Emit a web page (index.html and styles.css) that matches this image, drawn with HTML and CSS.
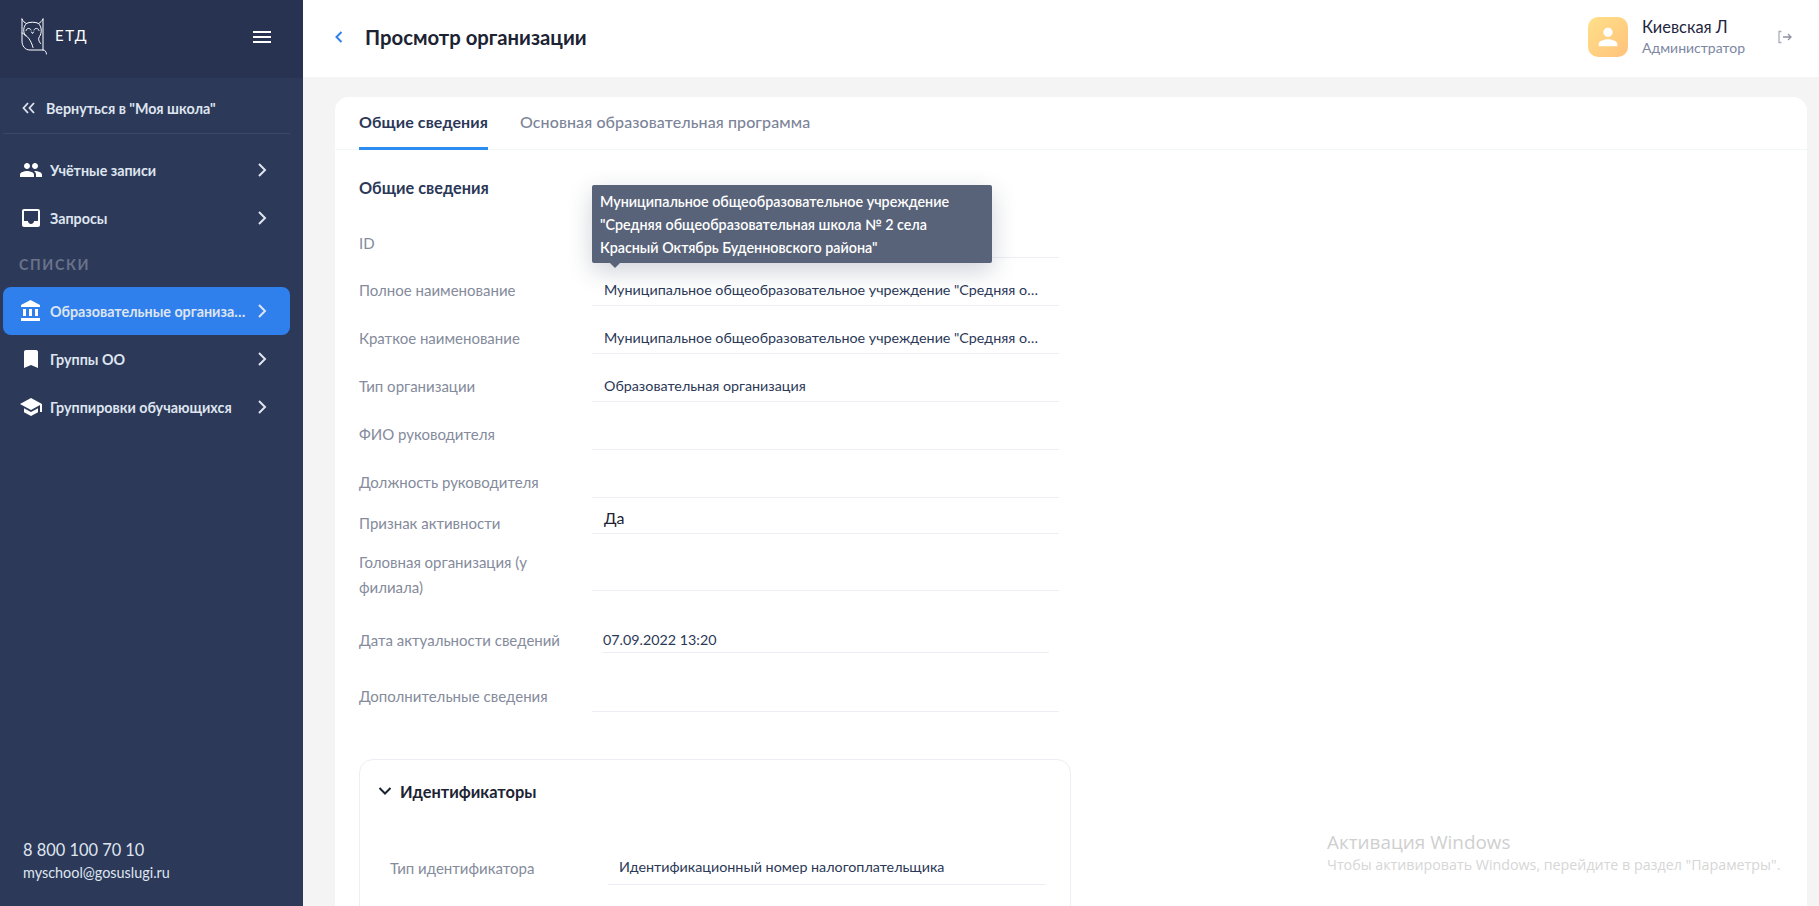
FILE: index.html
```html
<!DOCTYPE html>
<html lang="ru">
<head>
<meta charset="utf-8">
<title>Просмотр организации</title>
<link rel="stylesheet" href="styles.css">
</head>
<body>
<div class="app">
  <aside class="side">
    <div class="brand">
      <svg class="owl" viewBox="0 0 26 37" fill="none" stroke="#fff" stroke-width="1" stroke-linecap="round" stroke-linejoin="round">
        <path d="M1 1v22c0 5 3 9 8 9h13c1.800 0 3.300 1.500 3.500 4M22 1v31"/>
        <path d="M1 1c1 2.500 2.500 3.500 4.500 4.500C8 3.800 15 3.800 17.500 5.500 19.500 4.500 21 3 22 1"/>
        <path d="M5.500 5.500C2 8.500 1.800 14.500 4.500 18M17.500 5.500c3.500 3 3.500 9.500 1 13-1.500 2-1 4.500 1 7"/>
        <path d="M1 15c5 2 9 7 11 14.500"/>
        <path d="M5 12.500c.5-2.500 4-3 5 -.5M13 12c1-2.500 4.500-2 5 .5M10.500 14l1 1.500 1-1.500"/>
      </svg>
      <span class="brand-name">ЕТД</span>
      <span class="burger"><i></i><i></i><i></i></span>
    </div>
    <a class="back">
      <svg class="back-ico" viewBox="0 0 14 12" fill="none" stroke="#dfe5f0" stroke-width="1.800"><path d="M6 1 1.500 6 6 11M12 1 7.500 6 12 11"/></svg>
      <span>Вернуться в "Моя школа"</span>
    </a>
    <nav class="nav">
      <a class="item">
        <svg class="ico" viewBox="0 0 24 24"><path d="M16 11c1.660 0 2.990-1.340 2.990-3S17.660 5 16 5c-1.660 0-3 1.340-3 3s1.340 3 3 3zm-8 0c1.660 0 2.990-1.340 2.990-3S9.660 5 8 5C6.340 5 5 6.340 5 8s1.340 3 3 3zm0 2c-2.330 0-7 1.170-7 3.500V19h14v-2.500c0-2.330-4.670-3.500-7-3.500zm8 0c-.29 0-.62.02-.97.05 1.160.84 1.970 1.970 1.970 3.450V19h6v-2.500c0-2.330-4.670-3.500-7-3.500z"/></svg>
        <span class="item-text">Учётные записи</span>
        <svg class="chev" viewBox="0 0 10 16"><path d="M2 2l6 6-6 6"/></svg>
      </a>
      <a class="item">
        <svg class="ico" viewBox="0 0 24 24"><path d="M19 3H4.990c-1.110 0-1.980.89-1.980 2L3 19c0 1.100.88 2 1.990 2H19c1.100 0 2-.9 2-2V5c0-1.110-.9-2-2-2zm0 12h-4c0 1.660-1.350 3-3 3s-3-1.340-3-3H4.990V5H19v10z"/></svg>
        <span class="item-text">Запросы</span>
        <svg class="chev" viewBox="0 0 10 16"><path d="M2 2l6 6-6 6"/></svg>
      </a>
      <div class="nav-title">СПИСКИ</div>
      <a class="item active">
        <svg class="ico" viewBox="0 0 24 24"><path d="M4 10v7h3v-7H4zm6 0v7h3v-7h-3zM2 22h19v-3H2v3zm14-12v7h3v-7h-3zm-4.500-9L2 6v2h19V6l-9.500-5z"/></svg>
        <span class="item-text">Образовательные организации</span>
        <svg class="chev" viewBox="0 0 10 16"><path d="M2 2l6 6-6 6"/></svg>
      </a>
      <a class="item">
        <svg class="ico" viewBox="0 0 24 24"><path d="M17 3H7c-1.100 0-1.990.9-1.990 2L5 21l7-3 7 3V5c0-1.100-.9-2-2-2z"/></svg>
        <span class="item-text">Группы ОО</span>
        <svg class="chev" viewBox="0 0 10 16"><path d="M2 2l6 6-6 6"/></svg>
      </a>
      <a class="item">
        <svg class="ico" viewBox="0 0 24 24"><path d="M5 13.180v4L12 21l7-3.820v-4L12 17l-7-3.820zM12 3L1 9l11 6 9-4.910V17h2V9L12 3z"/></svg>
        <span class="item-text">Группировки обучающихся</span>
        <svg class="chev" viewBox="0 0 10 16"><path d="M2 2l6 6-6 6"/></svg>
      </a>
    </nav>
    <div class="contacts">
      <div class="phone">8 800 100 70 10</div>
      <div class="mail">myschool@gosuslugi.ru</div>
    </div>
  </aside>
  <main class="main">
    <header class="top">
      <svg class="top-back" viewBox="0 0 8 12"><path d="M6.500 1 1.500 6l5 5"/></svg>
      <h1 class="page-title">Просмотр организации</h1>
      <div class="avatar"><svg viewBox="0 0 24 24"><path d="M12 12c2.210 0 4-1.790 4-4s-1.790-4-4-4-4 1.790-4 4 1.790 4 4 4zm0 2c-2.670 0-8 1.340-8 4v2h16v-2c0-2.660-5.330-4-8-4z"/></svg></div>
      <div class="user">
        <div class="user-name">Киевская Л</div>
        <div class="user-role">Администратор</div>
      </div>
      <svg class="logout" viewBox="0 0 16 14" fill="none"><path d="M4.500 1.500H2v11h2.500" stroke="#a9aeb9" stroke-width="1.300"/><path d="M6 7h8M11 4l3 3-3 3" stroke="#8d93a1" stroke-width="1.300"/></svg>
    </header>
    <div class="content">
      <section class="card">
        <div class="tabs">
          <a class="tab on">Общие сведения</a>
          <a class="tab">Основная образовательная программа</a>
        </div>
        <div class="body">
          <h2 class="sec-title">Общие сведения</h2>
          <div class="form">
            <div class="row r-id"><span class="lab">ID</span><span class="val"></span></div>
            <div class="row"><span class="lab">Полное наименование</span><span class="val">Муниципальное общеобразовательное учреждение "Средняя общеобразовательная школа № 2 села Красный Октябрь Буденновского района"</span></div>
            <div class="row"><span class="lab">Краткое наименование</span><span class="val">Муниципальное общеобразовательное учреждение "Средняя общеобразовательная школа № 2 села Красный Октябрь Буденновского района"</span></div>
            <div class="row"><span class="lab">Тип организации</span><span class="val">Образовательная организация</span></div>
            <div class="row"><span class="lab">ФИО руководителя</span><span class="val"></span></div>
            <div class="row"><span class="lab">Должность руководителя</span><span class="val"></span></div>
            <div class="row r-active"><span class="lab">Признак активности</span><span class="val big">Да</span></div>
            <div class="row r-head"><span class="lab">Головная организация (у филиала)</span><span class="val"></span></div>
            <div class="row r-date"><span class="lab">Дата актуальности сведений</span><span class="val">07.09.2022 13:20</span></div>
            <div class="row r-extra"><span class="lab">Дополнительные сведения</span><span class="val"></span></div>
          </div>
          <div class="sub">
            <div class="sub-head">
              <svg class="sub-chev" viewBox="0 0 14 10"><path d="M1.500 2 7 7.500 12.500 2"/></svg>
              <span>Идентификаторы</span>
            </div>
            <div class="row r-sub"><span class="lab">Тип идентификатора</span><span class="val">Идентификационный номер налогоплательщика</span></div>
          </div>
        </div>
        <div class="tip">Муниципальное общеобразовательное учреждение "Средняя общеобразовательная школа № 2 села Красный Октябрь Буденновского района"</div>
        <div class="winmark">
          <div class="win-a">Активация Windows</div>
          <div class="win-b">Чтобы активировать Windows, перейдите в раздел "Параметры".</div>
        </div>
      </section>
    </div>
  </main>
</div>
</body>
</html>
```
FILE: styles.css
```css
* { box-sizing: border-box; }
html, body { margin: 0; height: 100%; overflow: hidden; }
body { font-family: Lato, "Open Sans", sans-serif; color: #2b3857; background: #f4f4f4; }
.app { display: flex; height: 906px; overflow: hidden; }

.side { width: 303px; flex: none; background: #2c3958; display: flex; flex-direction: column; color: #dfe5f0; }
.brand { height: 78px; flex: none; background: #273350; display: flex; align-items: center; padding: 0 32px 4px 21px; }
.owl { width: 26px; height: 37px; margin-bottom: 2px; }
.brand-name { margin: 0 0 5px 8px; color: #fff; font-size: 15px; letter-spacing: 1.500px; }
.burger { margin-left: auto; width: 18px; display: flex; flex-direction: column; gap: 3px; }
.burger i { display: block; height: 2px; background: #fff; }
.back { height: 56px; margin: 0 13px 0 3px; padding: 5px 0 0 19px; display: flex; align-items: center; gap: 10px; border-bottom: 1px solid #3a4766; font-size: 14.300px; font-weight: 700; }
.back-ico { width: 14px; height: 12px; }
.nav { padding: 12px 13px 0 3px; }
.item { height: 48px; display: flex; align-items: center; padding: 0 23px 0 16px; border-radius: 8px; font-size: 14.300px; font-weight: 700; }
.item.active { background: #2f80ed; }
.ico { width: 24px; height: 24px; fill: #fff; flex: none; margin-right: 7px; }
.item-text { flex: 1; min-width: 0; white-space: nowrap; overflow: hidden; text-overflow: ellipsis; }
.chev { width: 10px; height: 16px; flex: none; margin-left: 10px; fill: none; stroke: #dfe5f0; stroke-width: 2; }
.nav-title { height: 45px; padding: 14px 0 0 16px; font-size: 14.300px; font-weight: 700; letter-spacing: 1.600px; color: #69738b; line-height: 18px; }
.contacts { margin-top: auto; padding: 0 0 22px 23px; color: #dfe5f0; }
.phone { font-size: 16.400px; line-height: 24px; }
.mail { font-size: 14.400px; line-height: 22px; }

.main { flex: 1; min-width: 0; display: flex; flex-direction: column; }
.top { height: 77px; flex: none; background: #fff; display: flex; align-items: center; padding: 0 26px 3px 32px; }
.top-back { width: 8px; height: 12px; fill: none; stroke: #2f80ed; stroke-width: 2; margin-right: 22px; }
.page-title { margin: 0; flex: 1; font-size: 20.300px; font-weight: 700; color: #1c2333; }
.avatar { width: 40px; height: 40px; border-radius: 10px; background: linear-gradient(135deg, #ffe08a, #ffc27a); display: flex; align-items: center; justify-content: center; }
.avatar svg { width: 28px; height: 28px; fill: #fff; }
.user { margin-left: 14px; width: 123px; }
.user-name { font-size: 16.400px; line-height: 21px; color: #1d2540; }
.user-role { font-size: 14px; line-height: 22px; color: #7d86a3; }
.logout { width: 16px; height: 14px; margin-left: 12px; }

.content { flex: 1; min-height: 0; padding: 20px 12px 0 32px; }
.card { position: relative; background: #fff; border-radius: 14px 14px 0 0; height: 900px; }
.tabs { height: 53px; padding-left: 24px; display: flex; gap: 32px; border-bottom: 1px solid #eef8f5; }
.tab { height: 53px; padding-top: 15px; font-size: 16px; line-height: 20px; letter-spacing: .1px; font-weight: 500; color: #7c8498; }
.tab.on { color: #2b3857; font-weight: 700; border-bottom: 3px solid #2d8cf0; }
.body { padding: 28px 0 0 24px; }
.sec-title { margin: 0; font-size: 16.300px; line-height: 20px; font-weight: 700; color: #2b3857; }
.form { margin-top: 13px; width: 699px; }
.row { display: flex; height: 48px; }
.lab { width: 233px; flex: none; padding: 20px 16px 0 0; font-size: 15px; line-height: 25px; color: #858b9c; }
.val { flex: none; width: 467px; padding: 20px 17px 0 12px; height: 48px; border-bottom: 1px solid #eceef3; font-size: 14.300px; line-height: 24px; color: #2b3857; white-space: nowrap; overflow: hidden; text-overflow: ellipsis; }
.r-id { height: 47px; }
.r-id .val { height: 47px; }
.r-active { height: 36px; }
.r-active .lab { padding-top: 13px; }
.r-active .val { height: 36px; padding-top: 8px; font-size: 16px; color: #1c2333; }
.r-head { height: 57px; }
.r-head .lab { padding-top: 16px; }
.r-head .val { height: 57px; }
.r-date { height: 62px; align-items: flex-start; }
.r-date .lab { padding-top: 37px; }
.r-date .val { width: 447px; margin-left: 10px; padding: 37px 0 0 1px; height: 62px; }
.r-extra { height: 59px; }
.r-extra .lab { padding-top: 31px; }
.r-extra .val { height: 59px; }
.sub { margin: 47px 0 0; width: 712px; height: 300px; border: 1px solid #eceef3; border-radius: 14px; padding: 0 24px 0 30px; }
.sub-head { height: 62px; display: flex; align-items: center; gap: 8px; font-size: 16.400px; font-weight: 700; color: #1c2333; margin-left: -12px; }
.sub-chev { width: 14px; height: 10px; fill: none; stroke: #1c2333; stroke-width: 2; }
.r-sub { margin-top: 28px; height: 35px; }
.r-sub .lab { width: 218px; padding-top: 6px; padding-right: 0; }
.r-sub .val { width: 438px; height: 35px; padding: 5px 0 0 11px; }

.tip { position: absolute; left: 257px; top: 88px; width: 400px; height: 78px; padding: 5px 8px; background: #586379; border-radius: 2px; color: #fff; font-size: 14.300px; font-weight: 600; line-height: 23px; box-shadow: 0 8px 24px rgba(40, 50, 80, .22); }
.tip::after { content: ""; position: absolute; left: 18px; bottom: -5px; border: 5px solid transparent; border-bottom: 0; border-top-color: #586379; }
.winmark { position: absolute; left: 992px; top: 732px; font-family: "Open Sans", sans-serif; color: #cfcfcf; }
.win-a { font-size: 18.900px; line-height: 26px; }
.win-b { font-size: 14.250px; line-height: 20px; white-space: nowrap; color: #d6d6d6; }
```
